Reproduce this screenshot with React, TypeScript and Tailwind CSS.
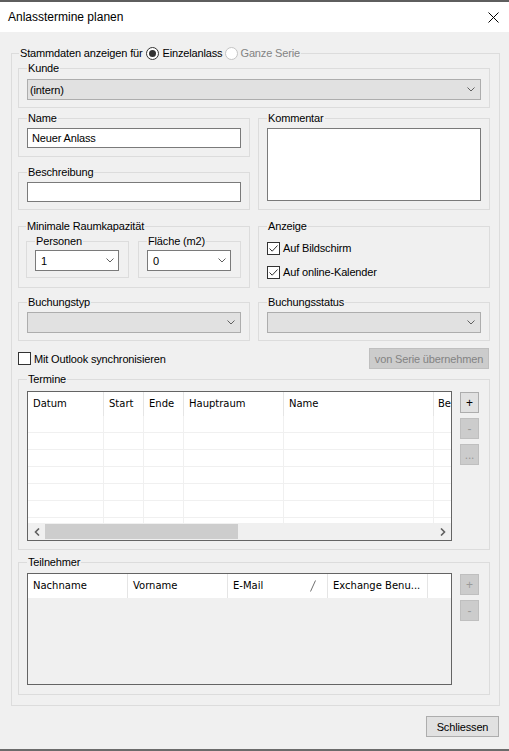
import type { ReactNode } from "react";
import { clsx } from "clsx";

const TERMINE_COLS = [
  { label: "Datum", w: "w-[76px]" },
  { label: "Start", w: "w-[40px]" },
  { label: "Ende", w: "w-[40px]" },
  { label: "Hauptraum", w: "w-[100px]" },
  { label: "Name", w: "w-[150px]" },
];

const TEILNEHMER_COLS = ["Nachname", "Vorname", "E-Mail", "Exchange Benu..."];

function Chevron() {
  return (
    <svg width="8" height="5" viewBox="0 0 8 5" className="shrink-0">
      <path d="M0.5 0.5 L4 4 L7.5 0.5" fill="none" stroke="#606060" strokeWidth="1" />
    </svg>
  );
}

function GroupBox({
  label,
  className,
  legendClassName,
  children,
}: {
  label: ReactNode;
  className?: string;
  legendClassName?: string;
  children?: ReactNode;
}) {
  return (
    <fieldset className={clsx("min-w-0 border border-[#dcdcdc]", className)}>
      <legend className={clsx("h-[14px] px-px leading-[14px]", legendClassName)}>{label}</legend>
      {children}
    </fieldset>
  );
}

function ComboBox({ value, white }: { value?: string; white?: boolean }) {
  return (
    <div
      className={clsx(
        "flex h-[21px] items-center justify-between border",
        white
          ? "border-[#7a7a7a] bg-white pl-[5px] pr-[4px]"
          : "border-[#adadad] bg-[#e1e1e1] pl-[2px] pr-[5px]"
      )}
    >
      <span>{value}</span>
      <Chevron />
    </div>
  );
}

function TextBox({ value }: { value?: string }) {
  return (
    <div className="flex h-[20px] items-center border border-[#7a7a7a] bg-white pl-[4px]">
      {value}
    </div>
  );
}

function CheckBox({ checked, label }: { checked?: boolean; label: string }) {
  return (
    <div className="flex items-center gap-[3px]">
      <span className="flex h-[13px] w-[13px] items-center justify-center border border-[#333333] bg-white">
        {checked && (
          <svg width="11" height="11" viewBox="0 0 11 11">
            <path d="M1.5 5.5 L4.2 8.2 L9.5 2.5" fill="none" stroke="#333333" strokeWidth="1" />
          </svg>
        )}
      </span>
      <span>{label}</span>
    </div>
  );
}

function Radio({ checked, disabled, className }: { checked?: boolean; disabled?: boolean; className?: string }) {
  return (
    <span
      className={clsx(
        "flex h-[13px] w-[13px] shrink-0 items-center justify-center rounded-full border bg-white",
        disabled ? "border-[#c4c4c4]" : "border-[#333333]",
        className
      )}
    >
      {checked && <span className="h-[7px] w-[7px] rounded-full bg-[#333333]" />}
    </span>
  );
}

function SideButton({ label, disabled }: { label: string; disabled?: boolean }) {
  return (
    <div
      className={clsx(
        "flex h-[21px] w-[19px] items-center justify-center border text-[12px]",
        disabled ? "border-[#bfbfbf] bg-[#cccccc] text-[#9a9a9a]" : "border-[#adadad] bg-[#e1e1e1] text-black"
      )}
    >
      {label}
    </div>
  );
}

function ScrollArrow({ dir }: { dir: "left" | "right" }) {
  return (
    <div className="flex h-[17px] w-[17px] shrink-0 items-center justify-center">
      <svg width="6" height="8" viewBox="0 0 6 8">
        <path
          d={dir === "left" ? "M5 0.5 L1.5 4 L5 7.5" : "M1 0.5 L4.5 4 L1 7.5"}
          fill="none"
          stroke="#606060"
          strokeWidth="1.6"
        />
      </svg>
    </div>
  );
}

function TermineTable() {
  return (
    <div className="flex h-[150px] w-[425px] shrink-0 flex-col overflow-hidden border border-[#646464] bg-white font-['DejaVu_Sans',Verdana,sans-serif] text-[10px] tracking-normal">
      <div className="flex h-[24px] shrink-0">
        {TERMINE_COLS.map((c) => (
          <div key={c.label} className={clsx("flex shrink-0 items-center border-r border-[#e5e5e5] pl-[5px]", c.w)}>
            {c.label}
          </div>
        ))}
        {/* last column is cut off by the list edge */}
        <div className="flex min-w-0 flex-1 items-center whitespace-nowrap pl-[4px]">Be</div>
      </div>
      <div className="h-[107px] shrink-0 overflow-hidden">
        {Array.from({ length: 7 }).map((_, i) => (
          <div key={i} className="flex h-[17px] border-b border-[#f0f0f0]">
            {TERMINE_COLS.map((c) => (
              <div key={c.label} className={clsx("shrink-0 border-r border-[#f0f0f0]", c.w)} />
            ))}
            <div className="flex-1" />
          </div>
        ))}
      </div>
      <div className="flex h-[17px] shrink-0 items-center bg-[#f0f0f0]">
        <ScrollArrow dir="left" />
        <div className="h-[15px] w-[193px] bg-[#cdcdcd]" />
        <div className="flex-1" />
        <ScrollArrow dir="right" />
      </div>
    </div>
  );
}

function TeilnehmerTable() {
  return (
    <div className="flex h-[112px] w-[425px] shrink-0 flex-col border border-[#646464] bg-[#f0f0f0] font-['DejaVu_Sans',Verdana,sans-serif] text-[10px] tracking-normal">
      <div className="flex h-[24px] shrink-0 bg-white">
        {TEILNEHMER_COLS.map((c) => (
          <div
            key={c}
            className="flex w-[100px] shrink-0 items-center justify-between border-r border-[#e5e5e5] pl-[5px] pr-[11px]"
          >
            <span className="whitespace-nowrap">{c}</span>
            {c === "E-Mail" && (
              <svg width="6" height="12" viewBox="0 0 6 12">
                <path d="M5.5 0.5 L0.5 11.5" stroke="#707070" strokeWidth="1" />
              </svg>
            )}
          </div>
        ))}
        <div className="flex-1" />
      </div>
    </div>
  );
}

export default function App() {
  return (
    <div className="flex h-[751px] w-[509px] flex-col overflow-hidden bg-[#f0f0f0] font-['Liberation_Sans',Arial,sans-serif] text-[11px] leading-[14px] tracking-[-0.15px] text-black">
      <div className="h-[2px] shrink-0 bg-[#5e5e5e]" />
      <div className="flex h-[30px] shrink-0 items-center justify-between bg-white pl-[8px] pr-[10px]">
        <span className="text-[12px] tracking-normal">Anlasstermine planen</span>
        <svg width="11" height="11" viewBox="0 0 11 11">
          <path d="M0.5 0.5 L10.5 10.5 M10.5 0.5 L0.5 10.5" stroke="#000" strokeWidth="1" />
        </svg>
      </div>

      <GroupBox
        className="ml-[11px] mt-[14px] w-[489px] shrink-0 pb-[10px] pl-[6px] pr-[9px]"
        legendClassName="ml-[1px] flex items-center"
        label={
          <>
            <span>Stammdaten anzeigen für</span>
            <Radio checked className="ml-[3px]" />
            <span className="ml-[4px]">Einzelanlass</span>
            <Radio disabled className="ml-[3px]" />
            <span className="ml-[2px] text-[#838383]">Ganze Serie</span>
          </>
        }
      >
        <GroupBox label="Kunde" className="mt-[1px] px-[8px] pb-[7px] pt-[4px]">
          <ComboBox value="(intern)" />
        </GroupBox>

        <div className="mt-[3px] grid grid-cols-[232px_232px] gap-x-[8px]">
          <div className="flex flex-col">
            <GroupBox label="Name" className="px-[8px] pb-[8px] pt-[3px]">
              <TextBox value="Neuer Anlass" />
            </GroupBox>
            <GroupBox label="Beschreibung" className="mt-[8px] px-[8px] pb-[7px] pt-[3px]">
              <TextBox />
            </GroupBox>
          </div>
          <GroupBox label="Kommentar" className="px-[8px] pb-[8px] pt-[3px]">
            <div className="h-[73px] border border-[#7a7a7a] bg-white" />
          </GroupBox>
        </div>

        <div className="mt-[9px] grid grid-cols-[232px_232px] gap-x-[8px]">
          <GroupBox label="Minimale Raumkapazität" className="pb-[9px] pl-[7px] pr-[8px] pt-[1px]">
            <div className="flex gap-[9px]">
              <GroupBox label="Personen" className="w-[103px] pb-[6px] pl-[8px] pr-[9px] pt-[2px]">
                <ComboBox value="1" white />
              </GroupBox>
              <GroupBox label="Fläche (m2)" className="w-[103px] pb-[6px] pl-[8px] pr-[9px] pt-[2px]">
                <ComboBox value="0" white />
              </GroupBox>
            </div>
          </GroupBox>
          <GroupBox label="Anzeige" className="flex flex-col px-[8px] pb-[6px] pt-[6px]">
            <div className="flex h-[18px] items-center">
              <CheckBox checked label="Auf Bildschirm" />
            </div>
            <div className="mt-[6px] flex h-[18px] items-center">
              <CheckBox checked label="Auf online-Kalender" />
            </div>
          </GroupBox>
        </div>

        <div className="mt-[7px] grid grid-cols-[232px_232px] gap-x-[8px]">
          <GroupBox label="Buchungstyp" className="px-[8px] pb-[7px] pt-[3px]">
            <ComboBox />
          </GroupBox>
          <GroupBox label="Buchungsstatus" className="px-[8px] pb-[7px] pt-[3px]">
            <ComboBox />
          </GroupBox>
        </div>

        <div className="mt-[7px] flex h-[21px] items-center justify-between">
          <CheckBox label="Mit Outlook synchronisieren" />
          <div className="mr-[1px] flex h-[21px] w-[120px] items-center justify-center border border-[#bfbfbf] bg-[#cccccc] text-[#838383]">
            von Serie übernehmen
          </div>
        </div>

        <GroupBox label="Termine" className="mt-[3px] px-[8px] pb-[8px] pt-[5px]">
          <div className="flex">
            <TermineTable />
            <div className="ml-[8px] mt-[1px] flex flex-col gap-[5px]">
              <SideButton label="+" />
              <SideButton label="-" disabled />
              <SideButton label="..." disabled />
            </div>
          </div>
        </GroupBox>

        <GroupBox label="Teilnehmer" className="mt-[5px] px-[8px] pb-[9px] pt-[4px]">
          <div className="flex">
            <TeilnehmerTable />
            <div className="ml-[8px] mt-[1px] flex flex-col gap-[5px]">
              <SideButton label="+" disabled />
              <SideButton label="-" disabled />
            </div>
          </div>
        </GroupBox>
      </GroupBox>

      <div className="mr-[10px] mt-[10px] flex h-[21px] w-[73px] shrink-0 items-center justify-center self-end border border-[#adadad] bg-[#e1e1e1]">
        Schliessen
      </div>

      <div className="mt-auto h-[2px] shrink-0 bg-[#6b6b6b]" />
    </div>
  );
}
